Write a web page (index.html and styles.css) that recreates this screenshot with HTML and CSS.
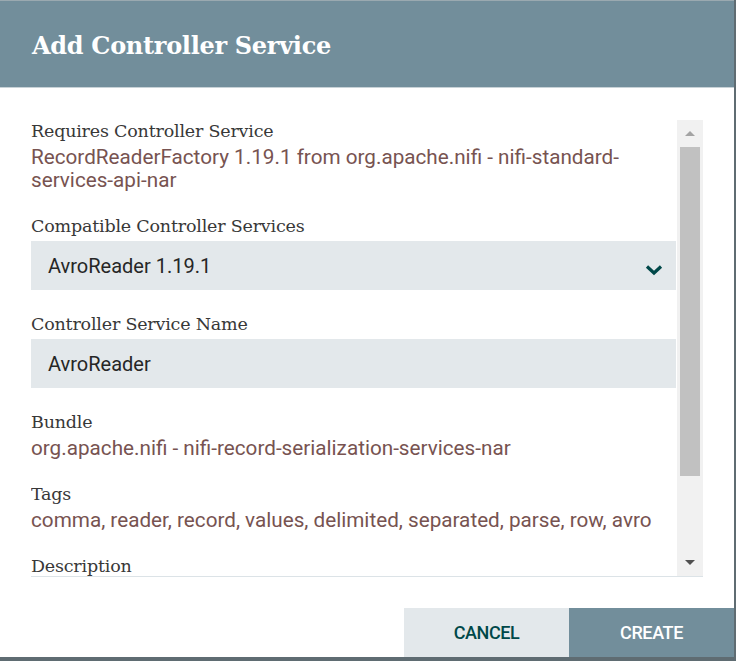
FILE: index.html
```html
<!DOCTYPE html>
<html>
<head>
<meta charset="utf-8">
<link rel="stylesheet" href="styles.css">
</head>
<body>
<div class="dialog">
  <div class="header"><h1 class="title">Add Controller Service</h1></div>
  <div class="body">
    <div class="scrollbox">
      <div class="content">
        <div class="field">
          <div class="label">Requires Controller Service</div>
          <div class="value">RecordReaderFactory 1.19.1 from org.apache.nifi - nifi-standard-services-api-nar</div>
        </div>
        <div class="field">
          <div class="label">Compatible Controller Services</div>
          <div class="select">
            <span>AvroReader 1.19.1</span>
            <svg class="chev" width="18" height="12" viewBox="0 0 18 12"><path d="M2 2.5 L9 9 L16 2.5" fill="none" stroke="#004849" stroke-width="3.2"/></svg>
          </div>
        </div>
        <div class="field">
          <div class="label">Controller Service Name</div>
          <div class="input">AvroReader</div>
        </div>
        <div class="field">
          <div class="label">Bundle</div>
          <div class="value">org.apache.nifi - nifi-record-serialization-services-nar</div>
        </div>
        <div class="field">
          <div class="label">Tags</div>
          <div class="value">comma, reader, record, values, delimited, separated, parse, row, avro</div>
        </div>
        <div class="field">
          <div class="label">Description</div>
        </div>
      </div>
      <div class="scrollbar">
        <div class="sb-btn"><span class="tri-up"></span></div>
        <div class="sb-track"><div class="sb-thumb"></div></div>
        <div class="sb-btn"><span class="tri-down"></span></div>
      </div>
    </div>
    <div class="footer">
      <button class="btn cancel">CANCEL</button>
      <button class="btn create">CREATE</button>
    </div>
  </div>
</div>
</body>
</html>
```
FILE: styles.css
```css
html, body { margin: 0; padding: 0; background: #fff; }
.dialog {
  width: 734px;
  height: 657px;
  border-right: 2px solid #5f6c72;
  border-bottom: 4px solid #5f6c72;
  display: flex;
  flex-direction: column;
  background: #fff;
}
.header {
  height: 86px;
  box-sizing: content-box;
  background: #728e9b;
  border-top: 1px solid #9aa9b0;
  border-bottom: 1px solid #c8d2d7;
  display: flex;
  align-items: center;
  padding-left: 32px;
}
.title {
  margin: 3px 0 0 0;
  color: #fff;
  font-family: "DejaVu Serif", serif;
  font-weight: bold;
  font-size: 24px;
  letter-spacing: -0.3px;
}
.body {
  flex: 1;
  display: flex;
  flex-direction: column;
  padding: 32px 0 0 31px;
}
.scrollbox {
  width: 672px;
  height: 456px;
  display: flex;
  border-bottom: 1px solid #dce3e7;
  overflow: hidden;
}
.content {
  width: 645px;
  overflow: hidden;
}
.field { margin-bottom: 23px; }
.label {
  font-family: "DejaVu Serif", serif;
  font-size: 17.5px;
  line-height: 22px;
  color: #383838;
  margin-bottom: 4px;
  letter-spacing: -0.2px;
}
.value {
  font-family: Roboto, sans-serif;
  font-size: 20.7px;
  line-height: 23px;
  color: #775351;
}
.select, .input {
  height: 49px;
  background: #e3e8eb;
  display: flex;
  align-items: center;
  justify-content: space-between;
  padding: 0 13px 0 17px;
  font-family: Roboto, sans-serif;
  font-size: 20px;
  color: #262626;
  box-sizing: border-box;
}
.chev { margin-top: 8px; }
.scrollbar {
  width: 26px;
  margin-left: 1px;
  background: #f1f1f1;
  display: flex;
  flex-direction: column;
}
.sb-btn {
  height: 27px;
  display: flex;
  align-items: center;
  justify-content: center;
}
.sb-track { flex: 1; padding: 0 3px; }
.sb-thumb { height: 329px; background: #c1c1c1; }
.tri-up {
  width: 0; height: 0;
  border-left: 5px solid transparent;
  border-right: 5px solid transparent;
  border-bottom: 5px solid #a3a3a3;
}
.tri-down {
  width: 0; height: 0;
  border-left: 5px solid transparent;
  border-right: 5px solid transparent;
  border-top: 5px solid #505050;
}
.footer {
  display: flex;
  justify-content: flex-end;
  margin-top: 31px;
}
.btn {
  width: 165px;
  height: 49px;
  border: none;
  margin: 0;
  font-family: Roboto, sans-serif;
  font-weight: 500;
  font-size: 18px;
  letter-spacing: -0.4px;
  cursor: pointer;
}
.cancel { background: #e3e8eb; color: #004849; }
.create { background: #728e9b; color: #fff; }
```
